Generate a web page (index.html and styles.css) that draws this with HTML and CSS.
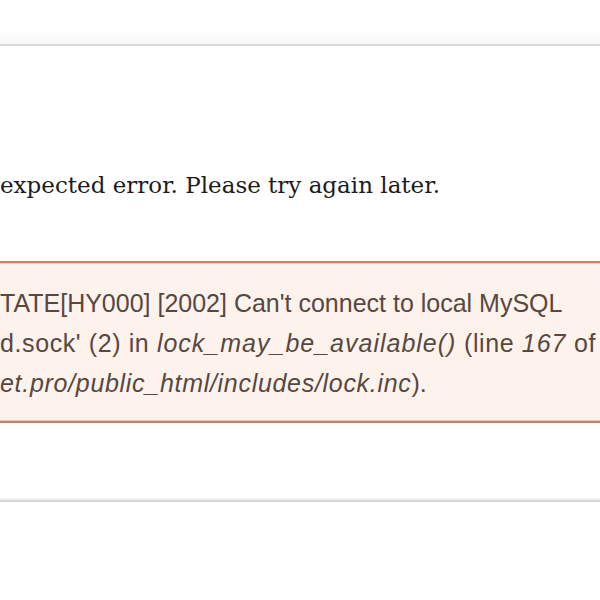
FILE: index.html
```html
<!DOCTYPE html>
<html lang="en">
<head>
<meta charset="utf-8">
<title>Error</title>
<link rel="stylesheet" href="styles.css">
</head>
<body>
<div class="top-bar"></div>
<main class="content">
  <p class="lead">expected error. Please try again later.</p>
  <div class="error-box">
    <div class="err-line">TATE[HY000] [2002] Can't connect to local MySQL</div>
    <div class="err-line err-line--loose">d.sock' (2) in <em>lock_may_be_available()</em> (line <em>167</em> of</div>
    <div class="err-line err-line--path"><em>et.pro/public_html/includes/lock.inc</em>).</div>
  </div>
</main>
<div class="bottom-bar"></div>
</body>
</html>
```
FILE: styles.css
```css
html, body {
  margin: 0;
  padding: 0;
  background: #ffffff;
  overflow: hidden;
}

.top-bar {
  height: 44px;
  background: linear-gradient(#ffffff 0%, #ffffff 70%, #f8f8f8 100%);
  border-bottom: 2px solid #dadada;
}

.content {
  padding-top: 124px;
}

.lead {
  margin: 0 0 61px 0;
  font-family: "DejaVu Serif", "Liberation Serif", serif;
  font-size: 23px;
  line-height: 30px;
  color: #1c1c1c;
  white-space: nowrap;
}

.error-box {
  background: #fdf2ec;
  border-top: 2px solid #c4866a;
  border-bottom: 2px solid #c4866a;
  box-shadow: inset 0 1px 0 #f3c9b1, inset 0 -1px 0 #f3c9b1;
  padding: 20px 0 18px 0;
  font-family: "Liberation Sans", Arial, sans-serif;
  font-size: 25px;
  line-height: 40px;
  color: #574842;
  margin-bottom: 77px;
}

.err-line {
  white-space: nowrap;
}

.err-line--loose {
  letter-spacing: 0.6px;
}

.err-line--loose em {
  letter-spacing: 1px;
}

.err-line--path em {
  letter-spacing: 0.7px;
}

.error-box em {
  font-style: italic;
}

.bottom-bar {
  height: 2px;
  background: #d6d6d6;
  box-shadow: 0 -2px 0 #f2f2f2, 0 2px 0 #ececec;
}
```
